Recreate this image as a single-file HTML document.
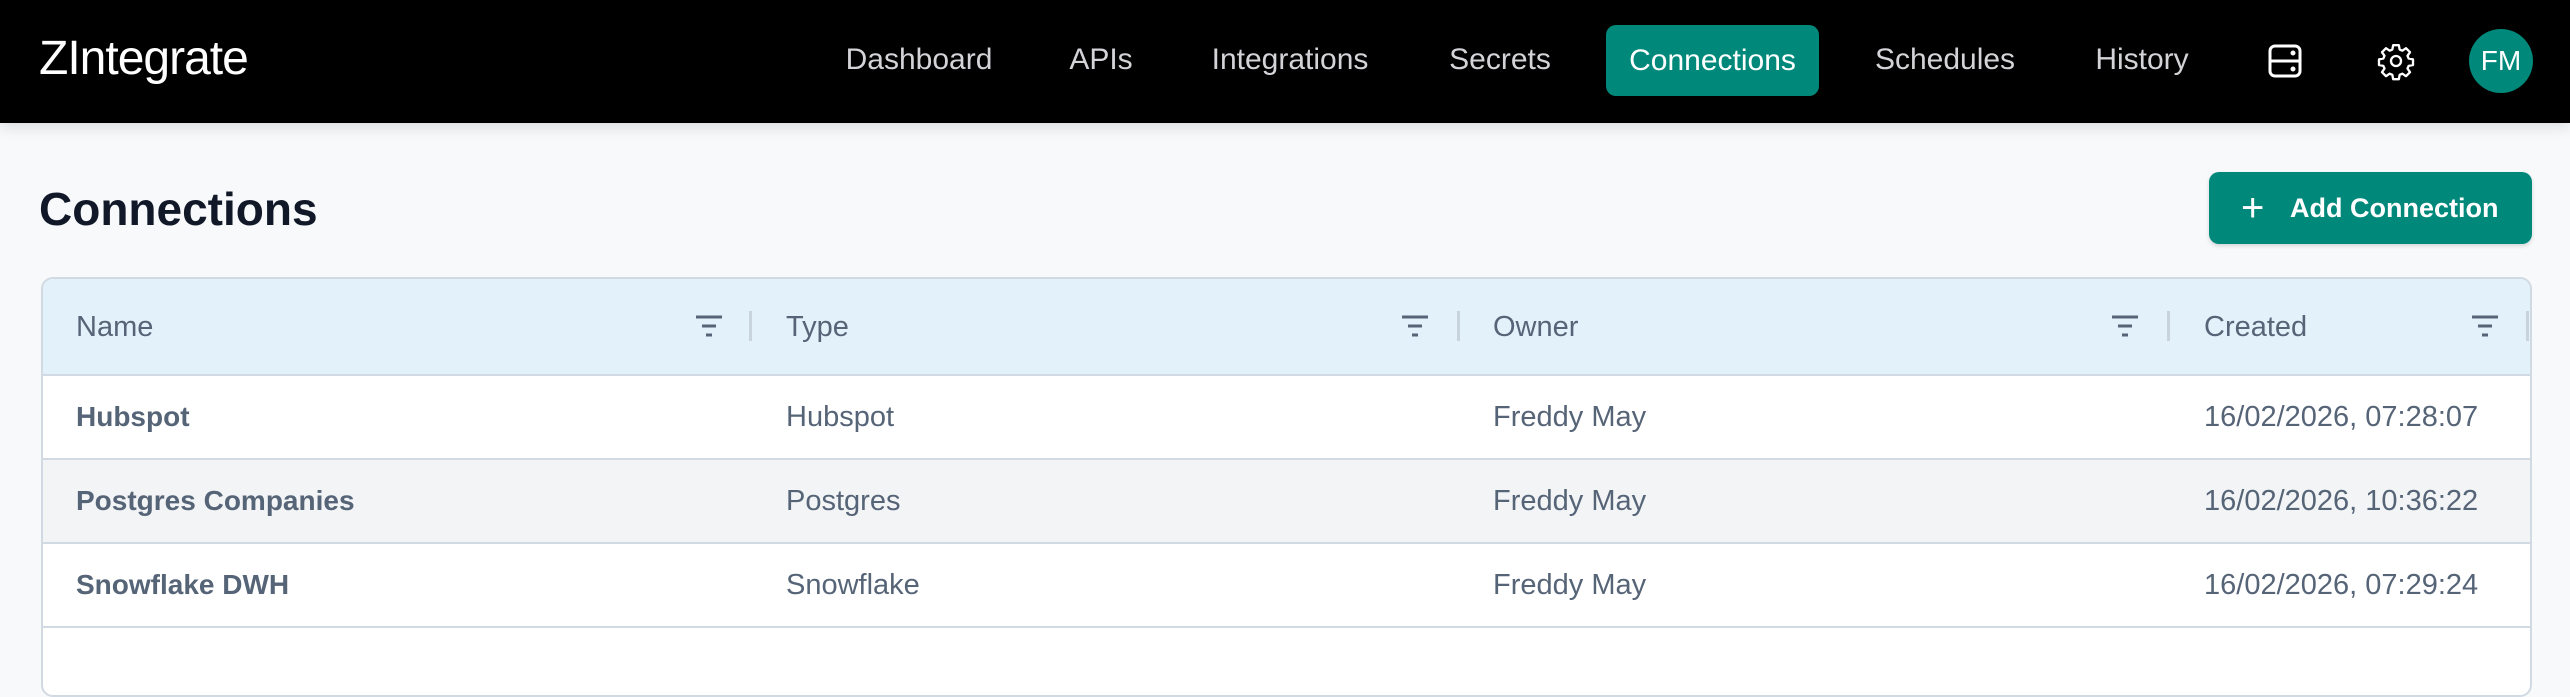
<!DOCTYPE html>
<html><head><meta charset="utf-8"><style>
*{box-sizing:border-box;margin:0;padding:0}
body{width:2570px;height:682px;overflow:hidden;background:#f7f9fb;font-family:"Liberation Sans",sans-serif;position:relative}
.nav{position:absolute;left:0;top:0;width:2570px;height:123px;background:#000;box-shadow:0 4px 14px rgba(0,0,0,.12)}
.logo{position:absolute;left:39px;top:31px;font-size:48px;color:#fff;letter-spacing:-1px}
.ni{position:absolute;top:43px;font-size:30px;color:#d4d4d8;transform:translateX(-50%)}
.act{position:absolute;left:1606px;top:25px;width:213px;height:71px;background:#00897b;border-radius:10px;color:#fff;font-size:30px;text-align:center;line-height:71px}
.av{position:absolute;left:2469px;top:29px;width:64px;height:64px;border-radius:50%;background:#00897b;color:#fff;font-size:28px;text-align:center;line-height:64px}
h1{position:absolute;left:39px;top:182px;font-size:46px;color:#111827;font-weight:700}
.btn{position:absolute;left:2209px;top:172px;width:323px;height:72px;background:#00897b;border-radius:10px;color:#fff;font-size:27px;font-weight:700;line-height:72px;box-shadow:0 2px 4px rgba(0,0,0,.15)}
.tbl{position:absolute;left:41px;top:277px;width:2491px;height:420px;border:2px solid #d1d9e2;border-radius:12px;background:#fff;overflow:hidden}
.hd{position:absolute;left:0;top:0;width:100%;height:97px;background:#e3f1fb;border-bottom:2px solid #d1d9e2}
.row{position:absolute;left:0;width:100%;height:84px;border-bottom:2px solid #d1d9e2}
.c{position:absolute;font-size:29px;color:#566477;line-height:1}
.hd .c{top:34px}
.row .c{top:27px}
.b{font-weight:700;font-size:28px}
.sep{position:absolute;top:32px;width:3px;height:30px;background:#c9d3dd}
.fi{position:absolute;top:34px}
</style></head><body>
<div class="nav">
<div class="logo">ZIntegrate</div>
<div class="ni" style="left:919px">Dashboard</div>
<div class="ni" style="left:1101px">APIs</div>
<div class="ni" style="left:1290px">Integrations</div>
<div class="ni" style="left:1500px">Secrets</div>
<div class="act">Connections</div>
<div class="ni" style="left:1945px">Schedules</div>
<div class="ni" style="left:2142px">History</div>
<svg style="position:absolute;left:2267px;top:43px" width="36" height="36" viewBox="0 0 36 36" fill="none" stroke="#fff" stroke-width="3"><rect x="3" y="3" width="30" height="30" rx="5"/><line x1="3" y1="18" x2="33" y2="18"/><circle cx="26" cy="10" r="1" fill="#fff"/><circle cx="26" cy="26" r="1" fill="#fff"/></svg>
<svg style="position:absolute;left:2376px;top:41px" width="40" height="40" viewBox="0 0 24 24" fill="none" stroke="#fff" stroke-width="1.4" stroke-linejoin="round"><path d="M10.3 2.5h3.4l.5 2.6 1.6.7 2.2-1.5 2.4 2.4-1.5 2.2.7 1.6 2.6.5v3.4l-2.6.5-.7 1.6 1.5 2.2-2.4 2.4-2.2-1.5-1.6.7-.5 2.6h-3.4l-.5-2.6-1.6-.7-2.2 1.5-2.4-2.4 1.5-2.2-.7-1.6-2.6-.5v-3.4l2.6-.5.7-1.6-1.5-2.2 2.4-2.4 2.2 1.5 1.6-.7z"/><circle cx="12" cy="12" r="3"/></svg>
<div class="av">FM</div>
</div>
<h1>Connections</h1>
<div class="btn"><span style="position:absolute;left:32px;top:0px;font-weight:300;font-size:40px">+</span><span style="position:absolute;left:81px">Add Connection</span></div>
<div class="tbl">
<div class="hd">
<div class="c" style="left:33px">Name</div>
<div class="c" style="left:743px">Type</div>
<div class="c" style="left:1450px">Owner</div>
<div class="c" style="left:2161px">Created</div>
<svg class="fi" style="left:652px" width="28" height="26" viewBox="0 0 28 26" stroke="#566477" stroke-width="3"><line x1="1" y1="4" x2="27" y2="4"/><line x1="7" y1="13" x2="21" y2="13"/><line x1="11" y1="22" x2="17" y2="22"/></svg>
<div class="sep" style="left:706px"></div>
<svg class="fi" style="left:1358px" width="28" height="26" viewBox="0 0 28 26" stroke="#566477" stroke-width="3"><line x1="1" y1="4" x2="27" y2="4"/><line x1="7" y1="13" x2="21" y2="13"/><line x1="11" y1="22" x2="17" y2="22"/></svg>
<div class="sep" style="left:1414px"></div>
<svg class="fi" style="left:2068px" width="28" height="26" viewBox="0 0 28 26" stroke="#566477" stroke-width="3"><line x1="1" y1="4" x2="27" y2="4"/><line x1="7" y1="13" x2="21" y2="13"/><line x1="11" y1="22" x2="17" y2="22"/></svg>
<div class="sep" style="left:2124px"></div>
<svg class="fi" style="left:2428px" width="28" height="26" viewBox="0 0 28 26" stroke="#566477" stroke-width="3"><line x1="1" y1="4" x2="27" y2="4"/><line x1="7" y1="13" x2="21" y2="13"/><line x1="11" y1="22" x2="17" y2="22"/></svg>
<div class="sep" style="left:2483px"></div>
</div>
<div class="row" style="top:97px">
<div class="c b" style="left:33px">Hubspot</div><div class="c" style="left:743px">Hubspot</div><div class="c" style="left:1450px">Freddy May</div><div class="c" style="left:2161px">16/02/2026, 07:28:07</div></div>
<div class="row" style="top:181px;background:#f2f4f6">
<div class="c b" style="left:33px">Postgres Companies</div><div class="c" style="left:743px">Postgres</div><div class="c" style="left:1450px">Freddy May</div><div class="c" style="left:2161px">16/02/2026, 10:36:22</div></div>
<div class="row" style="top:265px">
<div class="c b" style="left:33px">Snowflake DWH</div><div class="c" style="left:743px">Snowflake</div><div class="c" style="left:1450px">Freddy May</div><div class="c" style="left:2161px">16/02/2026, 07:29:24</div></div>
</div>
</body></html>
